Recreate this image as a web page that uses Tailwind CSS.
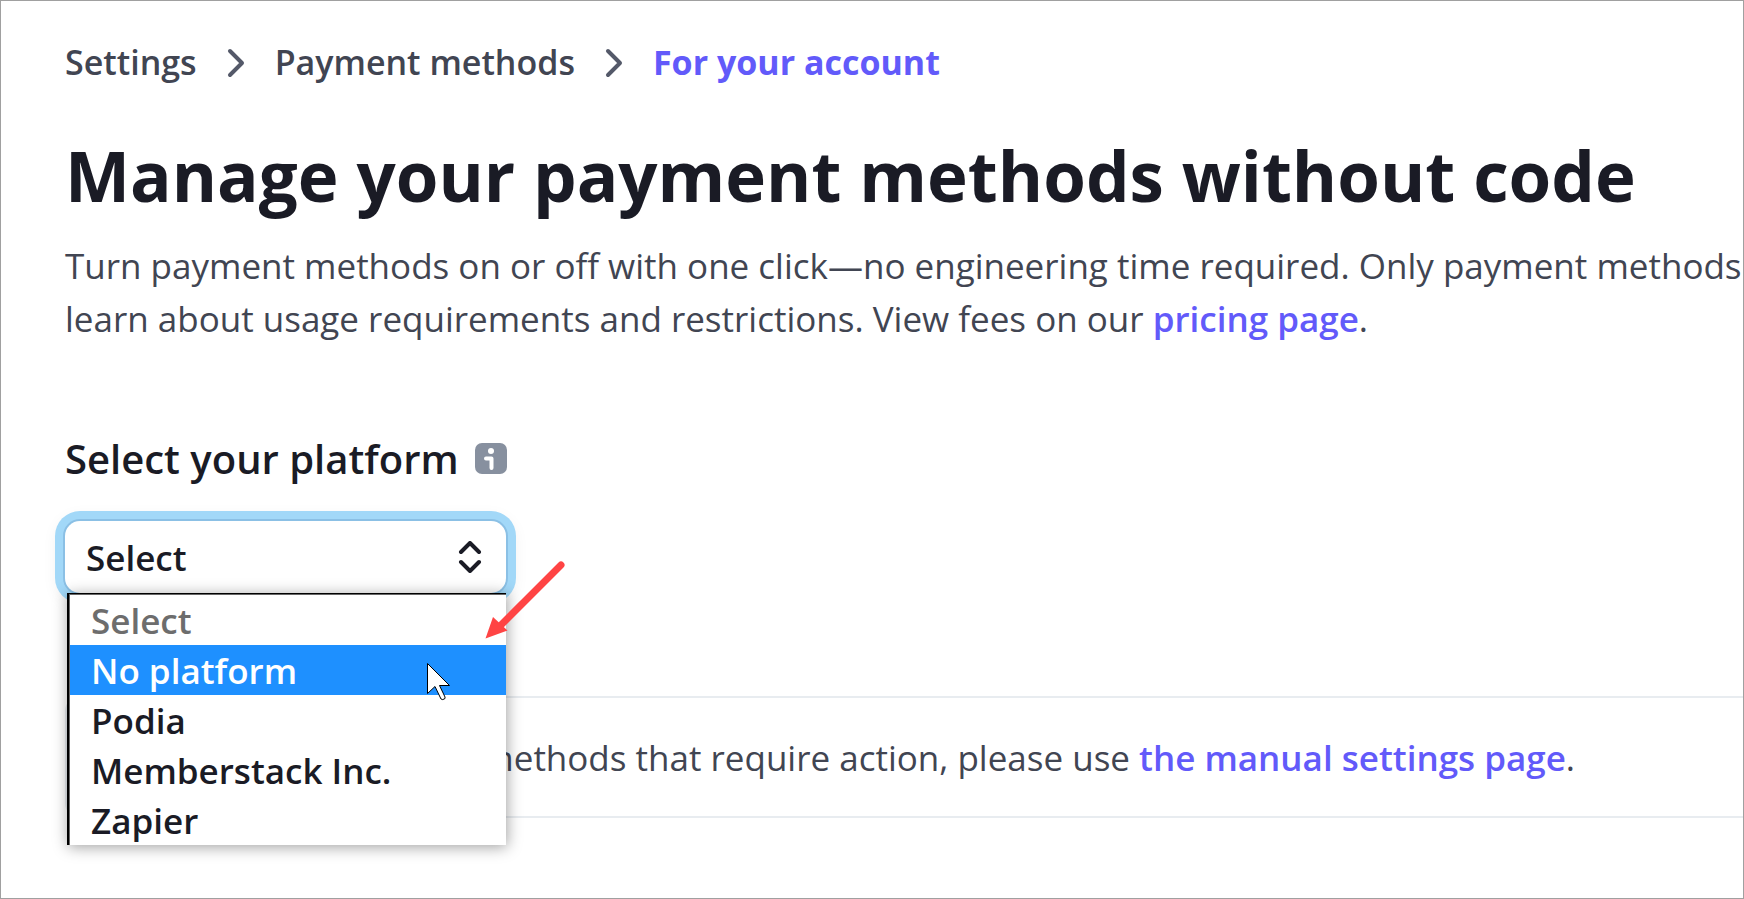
<!DOCTYPE html>
<html lang="en">
<head>
  <meta charset="UTF-8" />
  <title>Payment methods</title>
  <meta name="viewport" content="width=device-width, initial-scale=1.0">
  <script src="https://cdn.jsdelivr.net/npm/@tailwindcss/browser@4"></script>
</head>
<body class="bg-white text-[#414552] font-['Open_Sans','Noto_Sans',sans-serif]">

  <main class="h-screen border border-[#a0a0a0] pl-16 pt-[35px] overflow-hidden whitespace-nowrap">

    <!-- Breadcrumbs -->
    <nav aria-label="Breadcrumb" class="flex items-center text-[34px] leading-[53px] font-semibold">
      <a href="#">Settings</a>
      <svg class="mx-[29px] w-5 h-8 shrink-0" viewBox="0 0 20 32" fill="none" stroke="#545969" stroke-width="4" stroke-linecap="round" stroke-linejoin="round"><path d="M4 4l12 12L4 28" /></svg>
      <a href="#">Payment methods</a>
      <svg class="mx-[29px] w-5 h-8 shrink-0" viewBox="0 0 20 32" fill="none" stroke="#545969" stroke-width="4" stroke-linecap="round" stroke-linejoin="round"><path d="M4 4l12 12L4 28" /></svg>
      <a href="#" aria-current="page" class="font-bold text-[#625afa]">For your account</a>
    </nav>

    <!-- Heading -->
    <h1 class="mt-9 text-[69px] leading-[100px] font-bold text-[#1a1b25]">Manage your payment methods without code</h1>
    <p class="mt-3.5 text-[35px] leading-[53px]">
      Turn payment methods on or off with one click—no engineering time required. Only payment methods<br>
      learn about usage requirements and restrictions. View fees on our <a href="#" class="font-semibold text-[#625afa]">pricing page</a>.
    </p>

    <!-- Platform picker -->
    <div class="mt-[84px] flex items-center gap-4">
      <label for="platform" class="text-[40px] leading-[60px] font-semibold text-[#1a1b25]">Select your platform</label>
      <button type="button" aria-label="About platforms">
        <svg class="w-8 h-8" viewBox="0 0 32 32"><rect width="32" height="31" rx="7" fill="#87909f" /><circle cx="16" cy="8" r="3" fill="#fff" /><path d="M11 15.500h5.500v9.500" fill="none" stroke="#fff" stroke-width="4" stroke-linecap="round" stroke-linejoin="round" /></svg>
      </button>
    </div>

    <div class="relative mt-8 w-[441px]">
      <select id="platform" class="block w-full h-[72px] appearance-none rounded-[15px] bg-white pl-[21px] pt-0.5 text-[35px] font-semibold text-[#1a1b25] outline-none shadow-[0_0_0_2px_#8bc0e5,0_0_0_10px_#a2d8f8,0_4px_16px_8px_#00000010]">
        <option>Select</option>
        <option>No platform</option>
        <option>Podia</option>
        <option>Memberstack Inc.</option>
        <option>Zapier</option>
      </select>
      <svg class="absolute right-6 top-5 w-6 h-8 pointer-events-none" viewBox="0 0 24 32" fill="none" stroke="#1a1b25" stroke-width="4" stroke-linecap="round" stroke-linejoin="round"><path d="M3 11l9-9 9 9M3 21l9 9 9-9" /></svg>

      <!-- Open list -->
      <ul role="listbox" aria-label="Platforms" class="absolute left-0.5 right-0 top-full z-10 border-t border-l-2 border-black bg-white pt-px pl-px text-[35px] leading-[52px] font-semibold text-[#1a1b25] shadow-[inset_1px_1px_0_#666666,1px_2px_14px_#00000060]">
        <li role="option" class="h-[50px] pl-[21px] text-[#6d6d6d]">Select</li>
        <li role="option" aria-selected="true" class="h-[50px] pl-[21px] bg-[#1e90ff] text-white">No platform</li>
        <li role="option" class="h-[50px] pl-[21px]">Podia</li>
        <li role="option" class="h-[50px] pl-[21px]">Memberstack Inc.</li>
        <li role="option" class="h-[50px] pl-[21px]">Zapier</li>
      </ul>

      <!-- Pointer -->
      <svg class="absolute left-[362px] top-[142px] z-20 w-6 h-[38px]" viewBox="0 0 24 38" fill="#fff" stroke="#000" stroke-width="1"><path d="M.5.5v30l7.500-7 6 12.500q1.500 1.500 4-.5v-1.500l-5.500-11.500h10z" /></svg>

      <!-- Arrow -->
      <svg class="absolute left-[420px] top-10 z-20 w-20 h-20" viewBox="0 0 80 80"><path d="M76 4L16 64" stroke="#ff4444" stroke-width="7" stroke-linecap="round" /><path d="M.5 77.500L8 56l14.500 13.500z" fill="#ff4444" /></svg>
    </div>

    <!-- Manual settings notice -->
    <div class="mt-[103px] -mr-8 rounded-[15px] border-2 border-[#e8ecf0] px-12 pt-[33px] pb-8 text-[35px] leading-[53px]">
      To configure payment methods that require action, please use <a href="#" class="font-semibold text-[#625afa]">the manual settings page</a>.
    </div>
  </main>

</body>
</html>
